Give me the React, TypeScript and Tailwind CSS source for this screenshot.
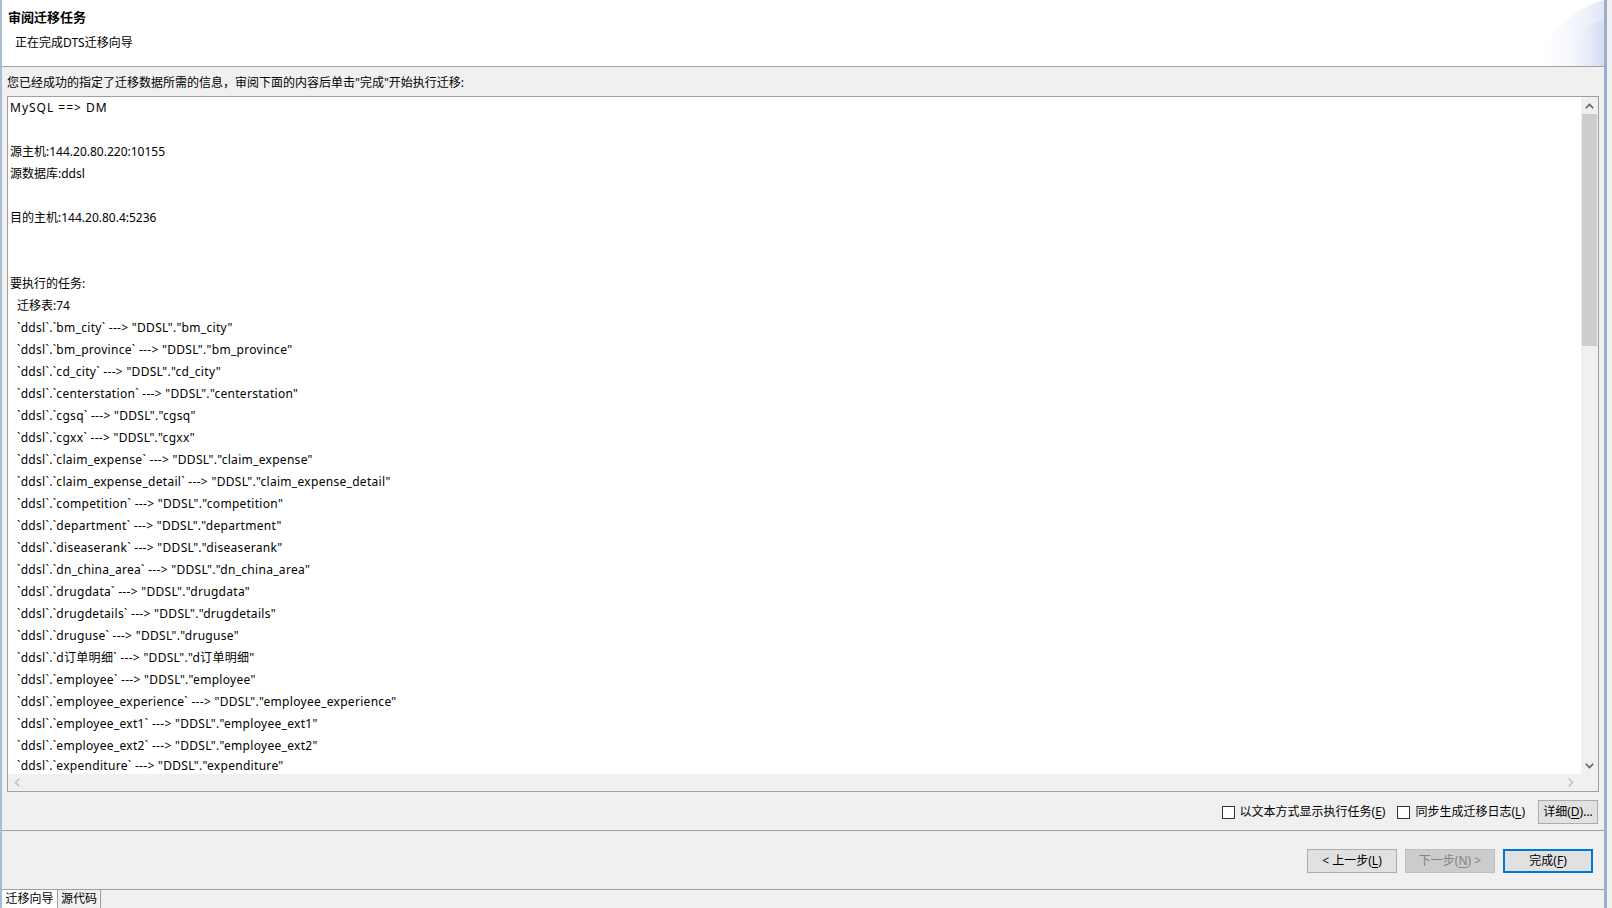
import React from "react";

const tables = [
  "bm_city",
  "bm_province",
  "cd_city",
  "centerstation",
  "cgsq",
  "cgxx",
  "claim_expense",
  "claim_expense_detail",
  "competition",
  "department",
  "diseaserank",
  "dn_china_area",
  "drugdata",
  "drugdetails",
  "druguse",
  "d订单明细",
  "employee",
  "employee_experience",
  "employee_ext1",
  "employee_ext2",
  "expenditure",
];

function Mn({ k }: { k: string }) {
  return (
    <>
      (<span className="underline underline-offset-2">{k}</span>)
    </>
  );
}

function Checkbox({ label, k }: { label: string; k: string }) {
  return (
    <label className="flex items-center gap-[5px]">
      <span className="w-[13px] h-[13px] border border-[#333333] bg-white" />
      <span>
        {label}
        <Mn k={k} />
      </span>
    </label>
  );
}

function HeaderArt() {
  return (
    <svg width="78" height="66" viewBox="0 0 78 66" className="shrink-0">
      <defs>
        <linearGradient id="g1" x1="0" y1="0" x2="1" y2="0">
          <stop offset="0" stopColor="#ffffff" stopOpacity="0" />
          <stop offset="1" stopColor="#dfe6f6" />
        </linearGradient>
        <linearGradient id="g2" x1="0" y1="0" x2="1" y2="0">
          <stop offset="0" stopColor="#ffffff" stopOpacity="0" />
          <stop offset="1" stopColor="#d3ddf2" />
        </linearGradient>
      </defs>
      <path d="M4,66 Q34,12 78,0 L78,66 Z" fill="url(#g1)" />
      <path d="M34,66 Q46,28 78,20 L78,66 Z" fill="url(#g2)" />
    </svg>
  );
}

export default function App() {
  return (
    <div
      className="w-[1612px] h-[908px] flex bg-[#f0f0f0] text-[12px] text-black overflow-hidden"
      style={{ fontFamily: '"Noto Sans", "Noto Sans CJK SC", sans-serif' }}
    >
      <div className="w-[2px] bg-[#aabcd3] shrink-0" />
      <div className="w-[1602px] h-[908px] flex flex-col shrink-0">
        {/* 标题区 */}
        <div className="shrink-0 h-[67px] bg-white flex justify-between border-b border-[#a0a0a0]">
          <div className="flex flex-col">
            <div className="pl-[6px] pt-[7px] leading-[21px] text-[13px] font-bold">审阅迁移任务</div>
            <div className="pl-[13px] pt-[4px] leading-[21px]">正在完成DTS迁移向导</div>
          </div>
          <HeaderArt />
        </div>

        <div className="shrink-0 pl-[5px] pt-[7px] h-[29px] leading-[18px]">
          您已经成功的指定了迁移数据所需的信息，审阅下面的内容后单击"完成"开始执行迁移:
        </div>

        {/* 内容框 */}
        <div className="shrink-0 mx-[5px] h-[696px] border border-[#a0a0a0] bg-white flex flex-col">
          <div className="flex flex-1 min-h-0">
            <div className="flex-1 pl-[2px] overflow-hidden leading-[22px] whitespace-pre">
              <div className="tracking-[1px]">MySQL ==&gt; DM</div>
              <div>&nbsp;</div>
              <div>源主机:144.20.80.220:10155</div>
              <div>源数据库:ddsl</div>
              <div>&nbsp;</div>
              <div>目的主机:144.20.80.4:5236</div>
              <div>&nbsp;</div>
              <div>&nbsp;</div>
              <div>要执行的任务:</div>
              <div className="pl-[7px]">迁移表:74</div>
              {tables.map((t, i) => (
                <div
                  key={t}
                  className={
                    i === tables.length - 1
                      ? "pl-[7px] tracking-[0.3px] pt-[1px] leading-[16px]"
                      : "pl-[7px] tracking-[0.3px]"
                  }
                >
                  `ddsl`.`{t}` ---&gt; "DDSL"."{t}"
                </div>
              ))}
            </div>
            <div className="w-[17px] bg-[#f0f0f0] flex flex-col">
              <div className="h-[17px] flex items-center justify-center">
                <svg width="9" height="6" viewBox="0 0 9 6">
                  <path d="M0.8,5.2 L4.5,1.5 L8.2,5.2" stroke="#606060" strokeWidth="1.6" fill="none" />
                </svg>
              </div>
              <div className="mx-[1px] h-[232px] bg-[#cdcdcd]" />
              <div className="flex-1" />
              <div className="h-[17px] flex items-center justify-center">
                <svg width="9" height="6" viewBox="0 0 9 6">
                  <path d="M0.8,0.8 L4.5,4.5 L8.2,0.8" stroke="#606060" strokeWidth="1.6" fill="none" />
                </svg>
              </div>
            </div>
          </div>
          <div className="h-[17px] shrink-0 bg-[#f0f0f0] flex items-center justify-between pl-[6px] pr-[24px]">
            <svg width="6" height="9" viewBox="0 0 6 9">
              <path d="M5.2,0.8 L1.5,4.5 L5.2,8.2" stroke="#c0c0c0" strokeWidth="1.6" fill="none" />
            </svg>
            <svg width="6" height="9" viewBox="0 0 6 9">
              <path d="M0.8,0.8 L4.5,4.5 L0.8,8.2" stroke="#c0c0c0" strokeWidth="1.6" fill="none" />
            </svg>
          </div>
        </div>

        {/* 选项 */}
        <div className="shrink-0 h-[39px] flex items-center justify-end pr-[6px] pt-[2px] border-b border-[#a0a0a0]">
          <div className="flex items-center gap-[12px]">
            <Checkbox label="以文本方式显示执行任务" k="E" />
            <Checkbox label="同步生成迁移日志" k="L" />
            <button className="ml-[1px] w-[60px] h-[24px] bg-[#e1e1e1] border border-[#adadad] text-[12px]">
              详细<Mn k="D" />...
            </button>
          </div>
        </div>

        {/* 按钮 */}
        <div className="shrink-0 h-[59px] flex items-center justify-end pr-[11px] gap-[8px] pt-[2px] border-b border-[#a0a0a0]">
          <button className="w-[90px] h-[24px] bg-[#e1e1e1] border border-[#adadad]">
            &lt; 上一步<Mn k="L" />
          </button>
          <button className="w-[90px] h-[24px] bg-[#cccccc] border border-[#bfbfbf] text-[#838383]">
            下一步<Mn k="N" /> &gt;
          </button>
          <button className="w-[90px] h-[24px] bg-[#e1e1e1] border-2 border-[#0078d7]">
            完成<Mn k="F" />
          </button>
        </div>

        {/* 底部标签 */}
        <div className="flex-1 flex items-stretch">
          <div className="w-[55px] bg-white flex items-center justify-center leading-none">迁移向导</div>
          <div className="w-[44px] border-x border-[#a0a0a0] flex items-center justify-center leading-none">源代码</div>
        </div>
      </div>
      <div className="w-[3px] bg-[#9cb0cc] shrink-0" />
      <div className="flex-1 bg-[#f0f0f0]" />
    </div>
  );
}
